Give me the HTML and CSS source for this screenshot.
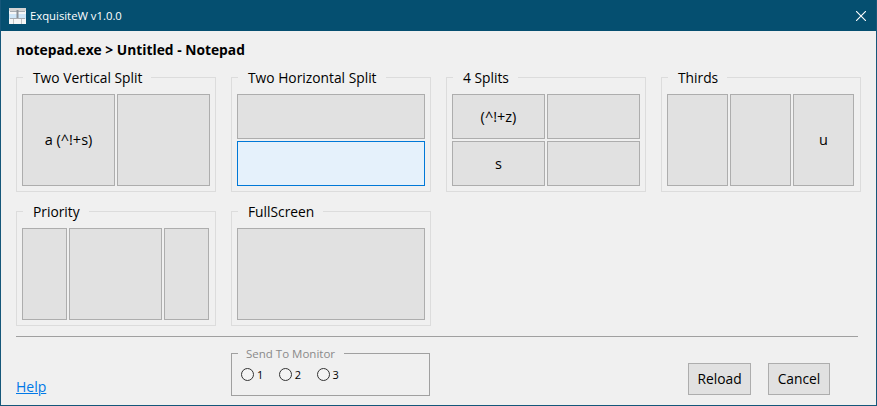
FILE: index.html
```html
<!DOCTYPE html>
<html lang="en">
<head>
<meta charset="utf-8">
<title>ExquisiteW v1.0.0</title>
<link rel="stylesheet" href="styles.css">
</head>
<body>
<div class="window">
  <header class="titlebar">
    <svg class="appicon" width="17" height="16" viewBox="0 0 17 16">
      <rect x="0" y="0" width="17" height="16" fill="#f6f6f6"/>
      <rect x="0" y="0" width="17" height="3" fill="#d4d4d4"/>
      <rect x="0" y="6" width="17" height="5" fill="#cfe6f7"/>
      <path d="M1 3.5H16M1 10.5H16" stroke="#a8adb2" fill="none"/>
      <path d="M8.5 2V10" stroke="#8b9096" stroke-width="2" fill="none"/>
      <path d="M4.5 11V16M12.5 11V16" stroke="#c4c4c4" fill="none"/>
    </svg>
    <span class="apptitle">ExquisiteW v1.0.0</span>
    <svg class="close" width="10" height="10" viewBox="0 0 10 10"><path d="M0 0L10 10M10 0L0 10" stroke="#fff" stroke-width="1.1" fill="none"/></svg>
  </header>
  <main class="content">
    <h1 class="heading">notepad.exe &gt; Untitled - Notepad</h1>
    <div class="layouts">
      <fieldset class="group">
        <legend>Two Vertical Split</legend>
        <div class="cells cols-2">
          <button class="cell">a (^!+s)</button>
          <button class="cell"></button>
        </div>
      </fieldset>
      <fieldset class="group">
        <legend>Two Horizontal Split</legend>
        <div class="cells rows-2">
          <button class="cell"></button>
          <button class="cell active"></button>
        </div>
      </fieldset>
      <fieldset class="group">
        <legend>4 Splits</legend>
        <div class="cells quad">
          <button class="cell">(^!+z)</button>
          <button class="cell"></button>
          <button class="cell">s</button>
          <button class="cell"></button>
        </div>
      </fieldset>
      <fieldset class="group">
        <legend>Thirds</legend>
        <div class="cells cols-3">
          <button class="cell"></button>
          <button class="cell"></button>
          <button class="cell">u</button>
        </div>
      </fieldset>
      <fieldset class="group">
        <legend>Priority</legend>
        <div class="cells priority">
          <button class="cell"></button>
          <button class="cell"></button>
          <button class="cell"></button>
        </div>
      </fieldset>
      <fieldset class="group">
        <legend>FullScreen</legend>
        <div class="cells single">
          <button class="cell"></button>
        </div>
      </fieldset>
    </div>
    <hr class="divider">
    <footer class="footer">
      <a class="help" href="#">Help</a>
      <fieldset class="monitor">
        <legend>Send To Monitor</legend>
        <label class="radio"><span class="dot"></span>1</label>
        <label class="radio"><span class="dot"></span>2</label>
        <label class="radio"><span class="dot"></span>3</label>
      </fieldset>
      <button class="btn reload">Reload</button>
      <button class="btn cancel">Cancel</button>
    </footer>
  </main>
</div>
</body>
</html>
```

FILE: styles.css
```css
* { box-sizing: border-box; }
html, body { margin: 0; padding: 0; }
body {
  width: 877px;
  height: 406px;
  overflow: hidden;
  font-family: "Open Sans", "Noto Sans", sans-serif;
  color: #000;
}
.window {
  width: 877px;
  height: 406px;
  background: #f0f0f0;
  border: 1px solid #15577a;
  border-top: 0;
  display: flex;
  flex-direction: column;
}
.titlebar {
  height: 31px;
  flex: none;
  background: #054f70;
  display: flex;
  align-items: center;
  padding: 0 10px 0 8px;
  color: #fff;
  font-size: 11.3px;
}
.appicon { flex: none; margin-right: 4px; }
.apptitle { flex: 1; }
.content {
  flex: 1;
  padding: 10px 18px 0 15px;
  display: flex;
  flex-direction: column;
}
.heading {
  margin: 0;
  font-size: 13.8px;
  font-weight: 700;
  line-height: 18px;
  height: 18px;
}
.layouts {
  display: grid;
  grid-template-columns: repeat(4, 200px);
  grid-template-rows: 125px 125px;
  column-gap: 15px;
  row-gap: 9px;
  margin-top: 8px;
}
.group {
  margin: 0;
  padding: 7px 5px 4px;
  border: 1px solid #dcdcdc;
  min-width: 0;
  display: block;
}
.group legend {
  margin-left: 1px;
  padding: 2px 9px 0 10px;
  font-size: 13.8px;
  line-height: 18px;
}
.cells {
  display: grid;
  gap: 2px;
  height: 92px;
}
.cols-2 { grid-template-columns: 93px 93px; }
.rows-2 { grid-template-rows: 1fr 1fr; }
.quad { grid-template-columns: 93px 93px; grid-template-rows: 1fr 1fr; }
.cols-3 { grid-template-columns: 61px 61px 61px; }
.priority { grid-template-columns: 45px 93px 45px; }
.cell {
  margin: 0;
  padding: 0 0 1px;
  background: #e1e1e1;
  border: 1px solid #adadad;
  font-family: inherit;
  font-size: 14.5px;
  color: #000;
}
.cell.active {
  background: #e5f1fb;
  border-color: #0078d7;
}
.divider {
  margin: 10px 0 0;
  height: 1px;
  border: 0;
  background: #a0a0a0;
  width: 842px;
}
.footer {
  flex: 1;
  display: flex;
  align-items: flex-start;
}
.help {
  width: 215px;
  margin-top: 41px;
  font-size: 14px;
  line-height: 18px;
  color: #0078e7;
  text-decoration: underline;
}
.monitor {
  width: 199px;
  height: 50px;
  margin: 9px 0 0;
  padding: 6px 0 0 9px;
  border: 1px solid #a0a0a0;
  display: flex;
  gap: 15.5px;
}
.monitor legend {
  margin-left: -3px;
  padding: 0 9px 0 8px;
  font-size: 11.5px;
  line-height: 15px;
  color: #8a8a8a;
}
.radio {
  display: flex;
  align-items: center;
  font-size: 11px;
  line-height: 15px;
  height: 15px;
}
.dot {
  width: 13px;
  height: 13px;
  border: 1px solid #333;
  border-radius: 50%;
  background: #f4f4f4;
  margin-right: 3px;
}
.btn {
  height: 32px;
  margin: 0;
  padding: 0 0 2px;
  background: #e1e1e1;
  border: 1px solid #adadad;
  font-family: inherit;
  font-size: 13.8px;
  color: #000;
}
.reload { width: 63px; margin-top: 26px; margin-left: 258px; }
.cancel { width: 62px; margin-top: 26px; margin-left: 17px; }
```
